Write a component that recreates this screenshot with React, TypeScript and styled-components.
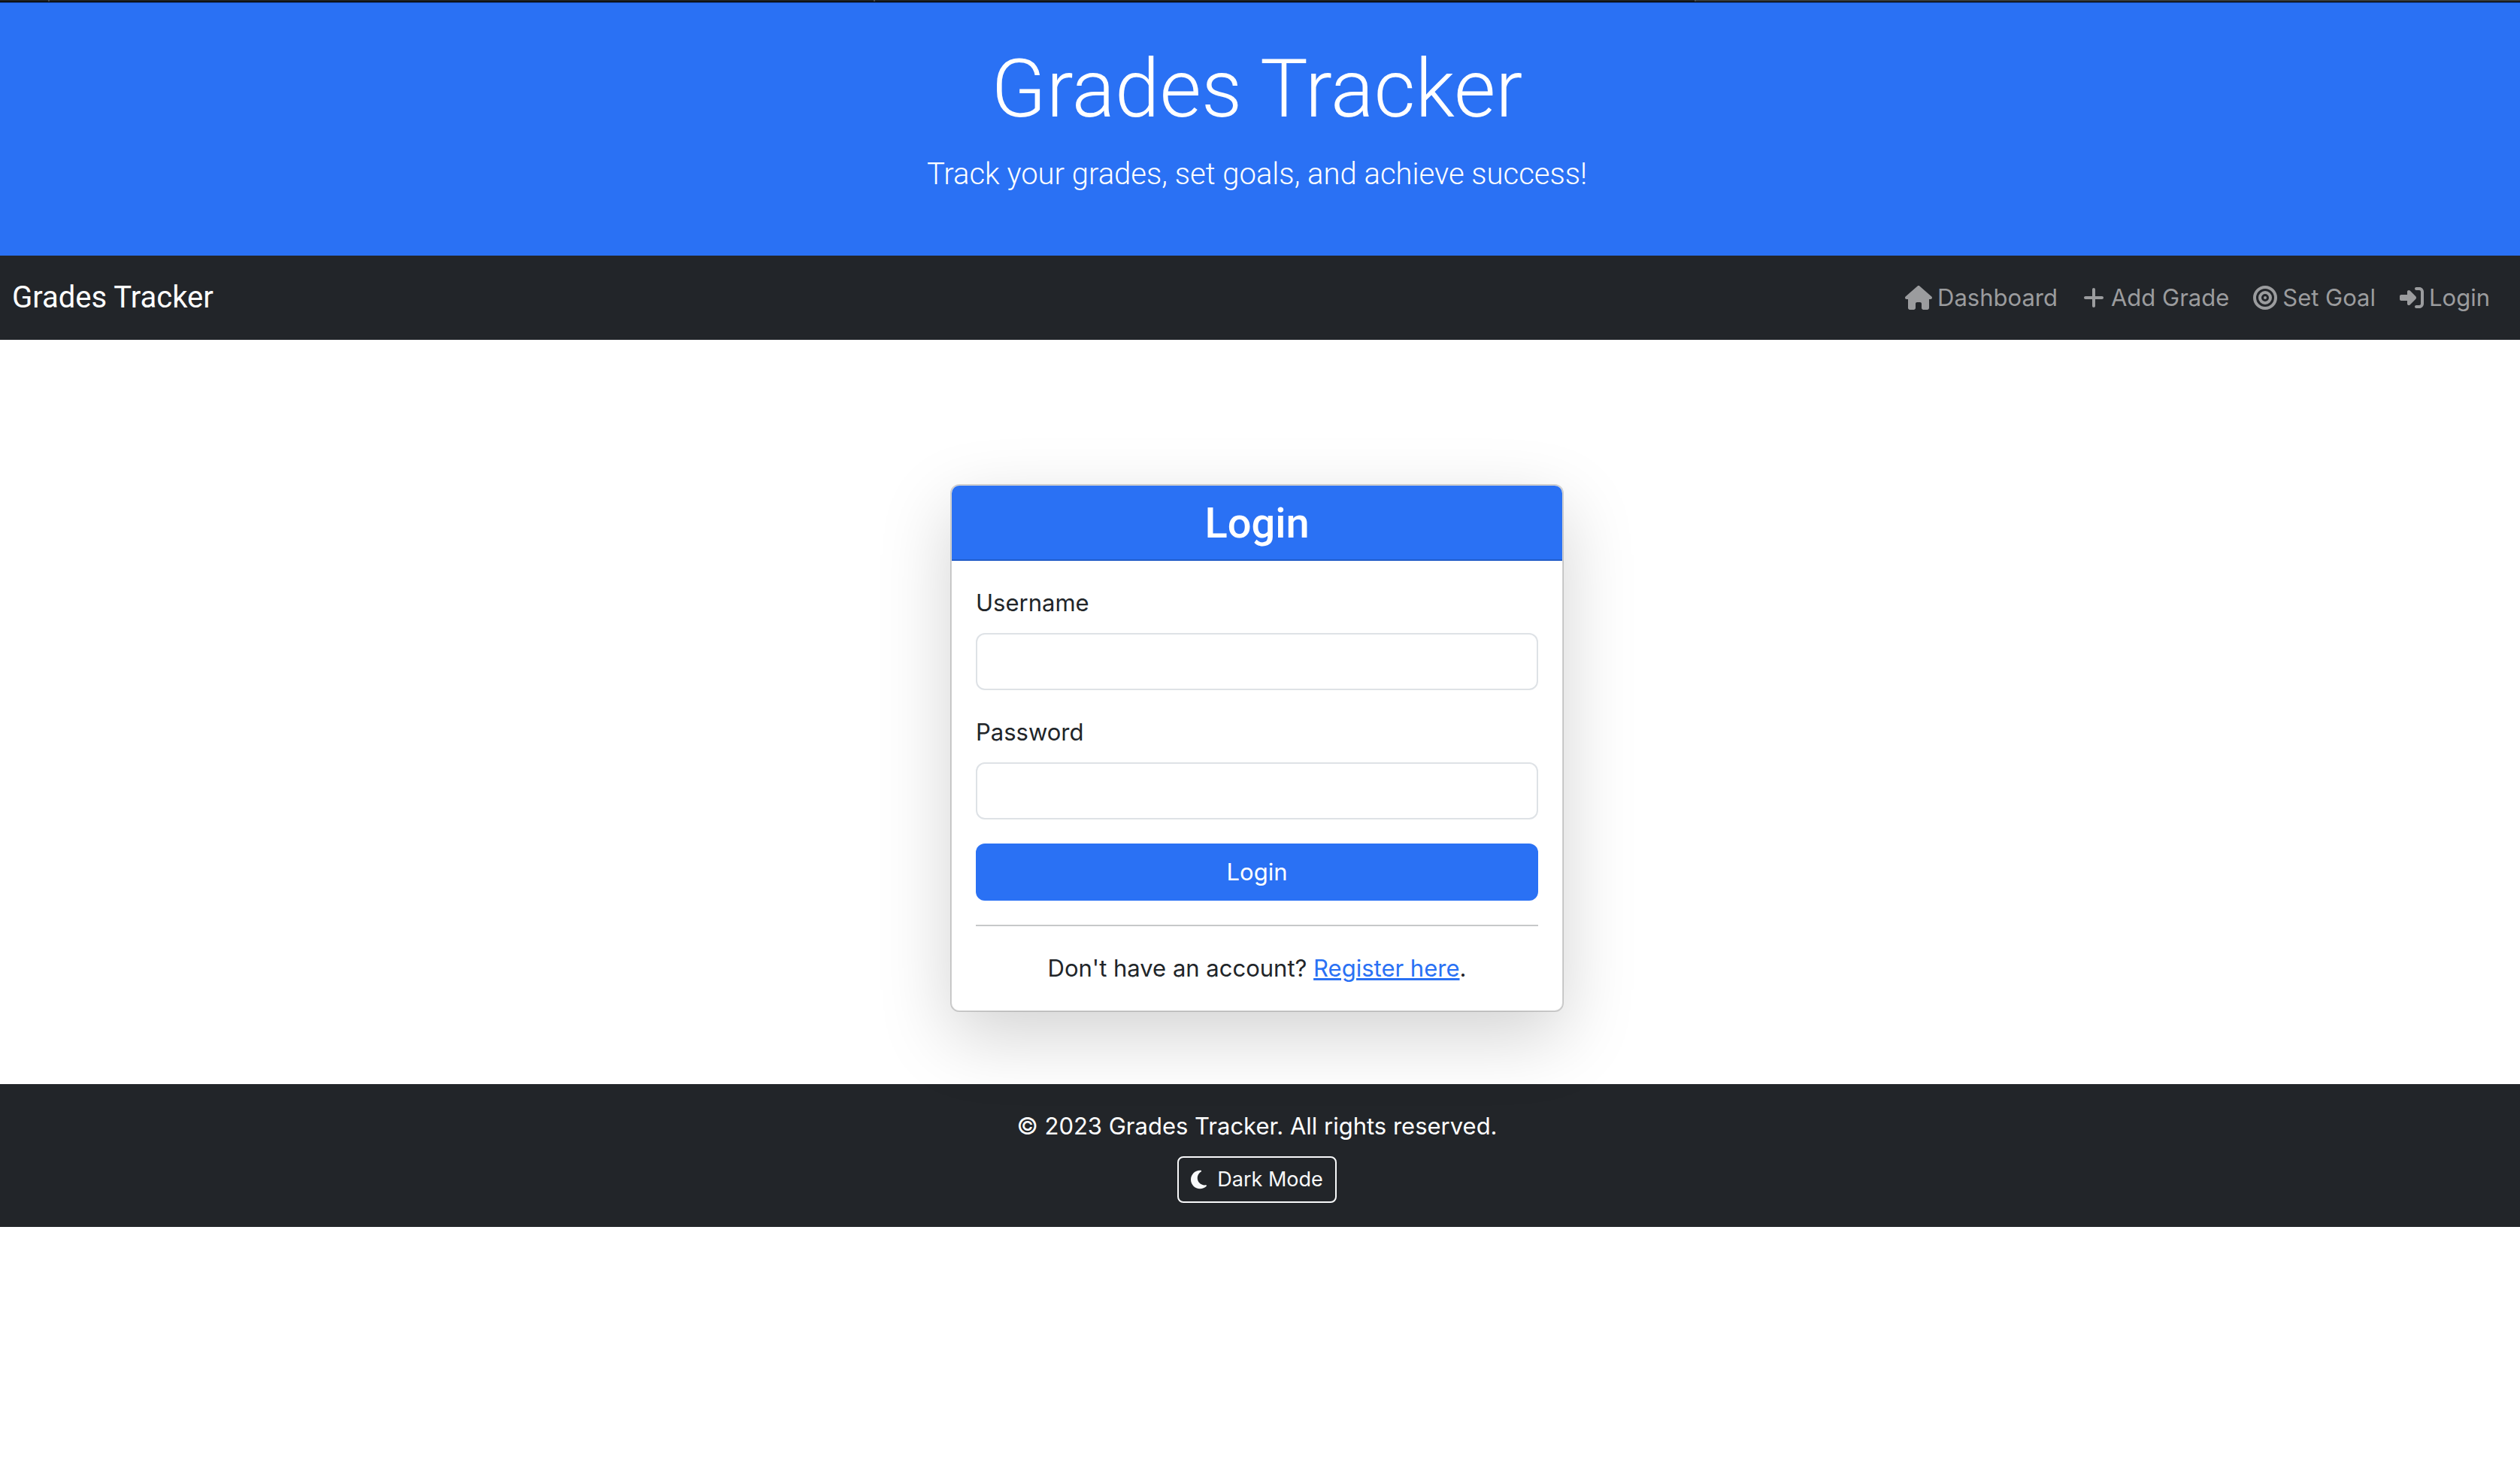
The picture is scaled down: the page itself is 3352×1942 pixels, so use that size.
import React from "react";
import styled, { createGlobalStyle } from "styled-components";
import { FaPlus, FaBullseye, FaRightToBracket } from "react-icons/fa6";

const blue = "#2a71f4";
const dark = "#222529";
const displayFont = "Roboto, Inter, sans-serif";

const GlobalStyle = createGlobalStyle`
  *, *::before, *::after { box-sizing: border-box; }
  body {
    margin: 0;
    background: #fff;
    color: #212529;
    font-family: Inter, "Liberation Sans", sans-serif;
    font-size: 31px;
    line-height: 48px;
  }
  h1, h2, p { margin: 0; }
`;

const TabStrip = styled.div`
  display: flex;
  height: 3px;
  background: #1f2222;
  border-bottom: 1px solid #000;
`;

const Tab = styled.div<{ $grow: number; $active?: boolean }>`
  flex: ${(p) => p.$grow} 1 0;
  border-right: ${(p) => (p.$active ? "0" : "2px solid #4b4e4e")};
  background: ${(p) => (p.$active ? "#353938" : "transparent")};
`;

const Header = styled.header`
  padding: 48px 8px 78px 0;
  background: ${blue};
  border-top: 1px solid #1d4fab;
  color: #fff;
  font-family: ${displayFont};
  text-align: center;
`;

const Title = styled.h1`
  margin-bottom: 16px;
  font-size: 107px;
  font-weight: 300;
  line-height: 134px;
`;

const Lead = styled.p`
  font-size: 40px;
  font-weight: 300;
  line-height: 60px;
`;

const Navbar = styled.nav`
  display: flex;
  align-items: center;
  justify-content: space-between;
  padding: 16px 24px 16px 16px;
  background: ${dark};
`;

const Brand = styled.a`
  color: #fff;
  font-family: ${displayFont};
  font-size: 40px;
  line-height: 80px;
  text-decoration: none;
`;

const NavList = styled.ul`
  display: flex;
  margin: 0;
  padding: 0;
  list-style: none;
`;

const NavLink = styled.a`
  display: flex;
  align-items: center;
  gap: 7px;
  padding: 16px;
  color: #9b9c9e;
  text-decoration: none;

  svg {
    width: auto;
    height: 32px;
  }
`;

const Main = styled.main`
  display: flex;
  justify-content: center;
  padding: 192px 8px 96px 0;
`;

const Card = styled.section`
  width: 100%;
  max-width: 816px;
  border: 2px solid rgba(0, 0, 0, 0.176);
  border-radius: 12px;
  background: #fff;
  background-clip: padding-box;
  box-shadow: 0 32px 96px rgba(0, 0, 0, 0.175);
`;

const CardHeader = styled.h2`
  padding: 16px 32px 14px;
  border-bottom: 2px solid rgba(0, 0, 0, 0.176);
  border-radius: 10px 10px 0 0;
  background: ${blue};
  color: #fff;
  font-family: ${displayFont};
  font-size: 56px;
  font-weight: 500;
  line-height: 68px;
  text-align: center;
`;

const CardBody = styled.div`
  padding: 32px;
`;

const Form = styled.form`
  display: flex;
  flex-direction: column;
  gap: 32px;
`;

const Field = styled.div`
  display: flex;
  flex-direction: column;
  gap: 16px;
`;

const TextInput = styled.input`
  width: 100%;
  height: 76px;
  padding: 12px 24px;
  border: 2px solid #dee2e6;
  border-radius: 12px;
  background: #fff;
  color: inherit;
  font: inherit;
`;

const SubmitButton = styled.button`
  height: 76px;
  border: 0;
  border-radius: 12px;
  background: ${blue};
  color: #fff;
  font: inherit;
`;

const Divider = styled.hr`
  margin: 32px 0;
  border: 0;
  border-top: 2px solid #c7c8c9;
`;

const Prompt = styled.p`
  text-align: center;
`;

const TextLink = styled.a`
  color: ${blue};
`;

const Footer = styled.footer`
  display: flex;
  flex-direction: column;
  align-items: center;
  gap: 16px;
  padding: 32px 8px 32px 0;
  background: ${dark};
  color: #fff;
`;

const ModeButton = styled.button`
  display: flex;
  align-items: center;
  gap: 14px;
  padding: 8px 16px;
  border: 2px solid #f8f9fa;
  border-radius: 8px;
  background: transparent;
  color: #f8f9fa;
  font: inherit;
  font-size: 27px;
  line-height: 42px;

  svg {
    width: auto;
    height: 28px;
  }
`;

const HouseIcon = () => (
  <svg viewBox="0 0 576 512" fill="currentColor" aria-hidden="true">
    <path d="M575.8 255.5c0 18-15 32.1-32 32.1h-32l.7 160.2c0 2.7-.2 5.4-.5 8.1V472c0 22.1-17.9 40-40 40H456c-1.1 0-2.2 0-3.3-.1c-1.4 .1-2.8 .1-4.2 .1H416 392c-22.1 0-40-17.9-40-40V448 384c0-17.7-14.3-32-32-32H256c-17.7 0-32 14.3-32 32v64 24c0 22.1-17.9 40-40 40H160 128.1c-1.5 0-3-.1-4.5-.2c-1.2 .1-2.4 .2-3.6 .2H104c-22.1 0-40-17.9-40-40V360c0-.9 0-1.9 .1-2.8V287.6H32c-18 0-32-14-32-32.1c0-9 3-17 10-24L266.4 8c7-7 15-8 22-8s15 2 21 7L564.8 231.5c8 7 12 15 11 24z" />
  </svg>
);

const MoonIcon = () => (
  <svg viewBox="0 0 384 512" fill="currentColor" aria-hidden="true">
    <path d="M223.5 32C100 32 0 132.3 0 256S100 480 223.5 480c60.6 0 115.5-24.2 155.8-63.4c5-4.9 6.3-12.5 3.1-18.7s-10.1-9.7-17-8.5c-9.8 1.7-19.8 2.6-30.1 2.6c-96.9 0-175.5-78.8-175.5-176c0-65.8 36-123.1 89.3-153.3c6.1-3.5 9.2-10.5 7.7-17.3s-7.3-11.9-14.3-12.5c-6.3-.5-12.6-.8-19-.8z" />
  </svg>
);

const links = [
  { label: "Dashboard", Icon: HouseIcon },
  { label: "Add Grade", Icon: FaPlus },
  { label: "Set Goal", Icon: FaBullseye },
  { label: "Login", Icon: FaRightToBracket },
];

export default function App() {
  return (
    <>
      <GlobalStyle />
      <TabStrip aria-hidden="true">
        <Tab $grow={64} />
        <Tab $grow={1098} />
        <Tab $grow={1092} />
        <Tab $grow={1098} $active />
      </TabStrip>
      <Header>
        <Title>Grades Tracker</Title>
        <Lead>Track your grades, set goals, and achieve success!</Lead>
      </Header>
      <Navbar>
        <Brand href="#">Grades Tracker</Brand>
        <NavList>
          {links.map(({ label, Icon }) => (
            <li key={label}>
              <NavLink href="#">
                <Icon />
                {label}
              </NavLink>
            </li>
          ))}
        </NavList>
      </Navbar>
      <Main>
        <Card>
          <CardHeader>Login</CardHeader>
          <CardBody>
            <Form onSubmit={(e) => e.preventDefault()}>
              <Field>
                <label htmlFor="username">Username</label>
                <TextInput id="username" type="text" />
              </Field>
              <Field>
                <label htmlFor="password">Password</label>
                <TextInput id="password" type="password" />
              </Field>
              <SubmitButton type="submit">Login</SubmitButton>
            </Form>
            <Divider />
            <Prompt>
              Don't have an account? <TextLink href="#">Register here</TextLink>.
            </Prompt>
          </CardBody>
        </Card>
      </Main>
      <Footer>
        <p>© 2023 Grades Tracker. All rights reserved.</p>
        <ModeButton type="button">
          <MoonIcon />
          Dark Mode
        </ModeButton>
      </Footer>
    </>
  );
}
